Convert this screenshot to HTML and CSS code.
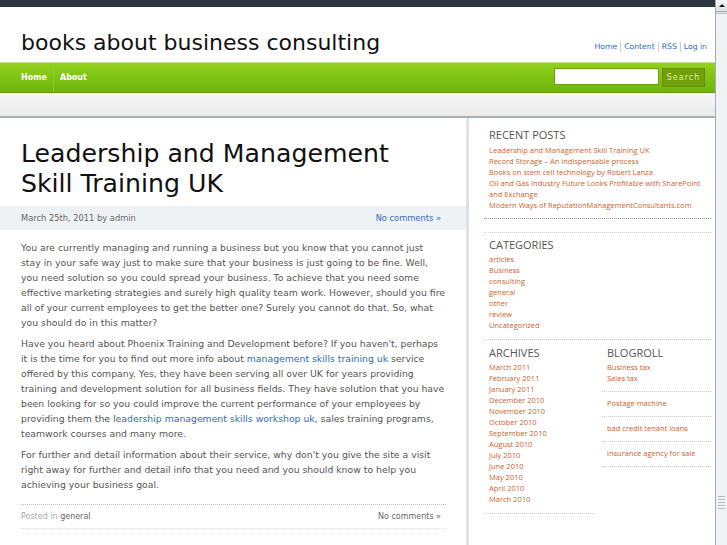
FILE: index.html
```html
<!DOCTYPE html>
<html lang="en">
<head>
  <meta charset="UTF-8">
  <title>books about business consulting</title>
  <link rel="stylesheet" href="styles.css">
</head>
<body>
  <div class="page">
    <div class="topbar"></div>
    <div class="header">
      <h1 class="site-title">books about business consulting</h1>
      <ul class="top-links">
        <li><a href="#">Home</a></li>
        <li><a href="#">Content</a></li>
        <li><a href="#">RSS</a></li>
        <li><a href="#">Log in</a></li>
      </ul>
    </div>
    <div class="nav">
      <ul class="menu">
        <li><a href="#">Home</a></li>
        <li><a href="#">About</a></li>
      </ul>
      <form class="search">
        <input type="text" class="search-box">
        <button type="button" class="search-btn">Search</button>
      </form>
    </div>
    <div class="subbar"></div>

    <div class="main">
      <div class="content">
        <h2 class="post-title">Leadership and Management Skill Training UK</h2>
        <div class="post-meta">
          <span>March 25th, 2011 by admin</span>
          <a href="#" class="comments">No comments &raquo;</a>
        </div>
        <div class="entry">
          <p>You are currently managing and running a business but you know that you cannot just stay&nbsp;in your safe way just to make sure that your business is just going to be fine. Well, you need solution so you could spread your business. To achieve that you need some effective marketing strategies and surely high quality team work. However, should you fire all of your current employees to get the better one? Surely you cannot do that. So, what you should do in this matter?</p>
          <p>Have you heard about Phoenix Training and Development before? If you haven't, perhaps it is the time for you to find out more info about <a href="#">management skills training uk</a> service offered by this company. Yes, they have been serving all over UK for years providing training and development solution for all business fields. They have solution that you have been looking for so you could improve the current performance of your employees by providing them the <a href="#">leadership management skills workshop uk</a>, sales training programs, teamwork courses and many more.</p>
          <p>For further and detail information about their service, why don't you give the site a visit right away for further and detail info that you need and you should know to help you achieving your business goal.</p>
        </div>
        <div class="post-footer">
          <span><span class="label">Posted in</span> <a href="#">general</a></span>
          <a href="#">No comments &raquo;</a>
        </div>
      </div>

      <div class="sidebar">
        <div class="widget recent">
          <h3>Recent Posts</h3>
          <ul>
            <li><a href="#">Leadership and Management Skill Training UK</a></li>
            <li><a href="#">Record Storage &ndash; An indispensable process</a></li>
            <li><a href="#">Books on stem cell technology by Robert Lanza</a></li>
            <li><a href="#">Oil and Gas Industry Future Looks Profitable with SharePoint and Exchange</a></li>
            <li><a href="#">Modern Ways of ReputationManagementConsultants.com</a></li>
          </ul>
        </div>
        <div class="widget categories">
          <h3>Categories</h3>
          <ul>
            <li><a href="#">articles</a></li>
            <li><a href="#">Business</a></li>
            <li><a href="#">consulting</a></li>
            <li><a href="#">general</a></li>
            <li><a href="#">other</a></li>
            <li><a href="#">review</a></li>
            <li><a href="#">Uncategorized</a></li>
          </ul>
        </div>
        <div class="columns">
          <div class="widget archives">
            <h3>Archives</h3>
            <ul>
              <li><a href="#">March 2011</a></li>
              <li><a href="#">February 2011</a></li>
              <li><a href="#">January 2011</a></li>
              <li><a href="#">December 2010</a></li>
              <li><a href="#">November 2010</a></li>
              <li><a href="#">October 2010</a></li>
              <li><a href="#">September 2010</a></li>
              <li><a href="#">August 2010</a></li>
              <li><a href="#">July 2010</a></li>
              <li><a href="#">June 2010</a></li>
              <li><a href="#">May 2010</a></li>
              <li><a href="#">April 2010</a></li>
              <li><a href="#">March 2010</a></li>
            </ul>
          </div>
          <div class="blogroll">
            <div class="widget links">
              <h3>Blogroll</h3>
              <ul>
                <li><a href="#">Business tax</a></li>
                <li><a href="#">Sales tax</a></li>
              </ul>
            </div>
            <div class="widget links">
              <ul><li><a href="#">Postage machine</a></li></ul>
            </div>
            <div class="widget links">
              <ul><li><a href="#">bad credit tenant loans</a></li></ul>
            </div>
            <div class="widget links">
              <ul><li><a href="#">insurance agency for sale</a></li></ul>
            </div>
          </div>
        </div>
      </div>
    </div>
  </div>

  <div class="scrollbar">
    <div class="sb-arrow"></div>
    <div class="sb-thumb"><div class="sb-grip"></div></div>
  </div>
</body>
</html>
```

FILE: styles.css
```css
html, body {
  height: 100%;
}
body {
  margin: 0;
  display: flex;
  overflow: hidden;
  background: #fff;
  font-family: "DejaVu Sans", Verdana, sans-serif;
  color: #555;
}
a {
  text-decoration: none;
}
ul {
  list-style: none;
  margin: 0;
  padding: 0;
}
.page {
  flex: 1;
  min-width: 0;
}
.topbar {
  height: 7px;
  background: #2d3540;
}

/* header */
.header {
  height: 55px;
  display: flex;
  justify-content: space-between;
  align-items: flex-end;
  padding: 0 8px 0 21px;
}
.site-title {
  margin: 0 0 6px;
  font-size: 22px;
  font-weight: normal;
  line-height: 26px;
  color: #111;
}
.top-links {
  display: flex;
  margin-bottom: 10px;
  font-size: 7.7px;
  line-height: 10px;
}
.top-links li + li {
  border-left: 1px solid #c5ccd3;
  margin-left: 3px;
  padding-left: 3px;
}
.top-links a {
  color: #2f6cb5;
}

/* green menu bar */
.nav {
  height: 29px;
  display: flex;
  justify-content: space-between;
  align-items: center;
  padding: 0 10px 0 15px;
  background: linear-gradient(#92d21e, #7dc113 55%, #70b40d);
  border-top: 1px solid #c5e58a;
  border-bottom: 1px solid #5f9a0a;
}
.menu {
  display: flex;
  height: 100%;
}
.menu li {
  display: flex;
  align-items: center;
  padding: 0 6px;
}
.menu li + li {
  border-left: 1px solid #8fd030;
}
.menu a {
  color: #fff;
  font-size: 8px;
  font-weight: bold;
}
.search {
  display: flex;
  gap: 3px;
  margin: 0;
}
.search-box {
  width: 105px;
  height: 17px;
  box-sizing: border-box;
  border: 1px solid #6aa20c;
  padding: 0;
  background: #fff;
}
.search-btn {
  width: 43px;
  height: 19px;
  padding: 0;
  background: #739f0c;
  border: 1px solid #62900a;
  color: #dbe9b4;
  font-family: "DejaVu Sans", sans-serif;
  font-size: 8px;
  letter-spacing: 1px;
}
.subbar {
  height: 23px;
  background: linear-gradient(#f7f7f7, #ebebeb);
  border-bottom: 2px solid #a8afb6;
}

/* main area */
.main {
  display: flex;
}
.content {
  width: 425px;
  padding: 0 20px 20px 21px;
  border-right: 3px solid #dfe2e5;
}
.post-title {
  margin: 21px 24px 7px 0;
  font-size: 25.2px;
  line-height: 30px;
  font-weight: normal;
  color: #111;
}
.post-meta {
  display: flex;
  justify-content: space-between;
  align-items: center;
  height: 24px;
  margin: 0 -20px 0 -21px;
  padding: 0 25px 0 21px;
  background: #eef2f4;
  font-size: 8.3px;
  color: #666;
}
.post-meta .comments {
  color: #2f6cb5;
}
.entry {
  padding-top: 10px;
  font-size: 9.3px;
  line-height: 15px;
}
.entry p {
  margin: 0 0 6px;
}
.entry a {
  color: #2f6cb5;
}
.post-footer {
  display: flex;
  justify-content: space-between;
  margin-top: 12px;
  padding: 0 5px 0 0;
  height: 23px;
  align-items: center;
  border-top: 1px dotted #bbb;
  border-bottom: 1px dotted #ddd;
  font-size: 8px;
}
.post-footer .label {
  color: #aaa;
}
.post-footer a {
  color: #666;
}

/* sidebar */
.sidebar {
  flex: 1;
  padding: 0 4px 0 15px;
  font-family: "Open Sans", sans-serif;
}
.widget h3 {
  margin: 0 0 2px 5px;
  font-size: 11px;
  line-height: 14px;
  font-weight: normal;
  text-transform: uppercase;
  color: #555;
}
.widget li {
  padding-left: 5px;
  font-size: 7.5px;
  line-height: 11px;
}
.widget a {
  color: #d0622c;
}
.recent {
  padding-top: 10px;
  padding-bottom: 7px;
  border-bottom: 1px dotted #999;
}
.recent h3 {
  margin-bottom: 3px;
}
.categories {
  margin-top: 13px;
  padding: 5px 0 8px;
  border-top: 1px dotted #ccc;
  border-bottom: 1px dotted #ccc;
}
.columns {
  display: flex;
  gap: 7px;
}
.archives {
  width: 111px;
  padding-top: 6px;
  padding-bottom: 8px;
  border-bottom: 1px dotted #ccc;
}
.blogroll {
  flex: 1;
}
.links {
  padding: 6px 0 7px;
  border-bottom: 1px dotted #ccc;
}

/* browser scrollbar */
.scrollbar {
  width: 11px;
  display: flex;
  flex-direction: column;
  border-left: 1px solid #a4abb2;
  background: #e4e7ea;
}
.sb-arrow {
  height: 11px;
  border-bottom: 1px solid #a4abb2;
  background: linear-gradient(#f4f5f6, #dfe2e5);
  display: flex;
  justify-content: center;
  align-items: center;
}
.sb-arrow::before {
  content: "";
  border: 3px solid transparent;
  border-bottom: 3px solid #111;
  border-top: 0;
}
.sb-thumb {
  flex: 1;
  margin-top: 1px;
  background: #f0f2f4;
  border-top: 1px solid #b8bec4;
}
.sb-grip {
  height: 13px;
  margin: 482px 2px 0;
  background: repeating-linear-gradient(#b7bcc1 0 1px, transparent 1px 3px);
}
```
